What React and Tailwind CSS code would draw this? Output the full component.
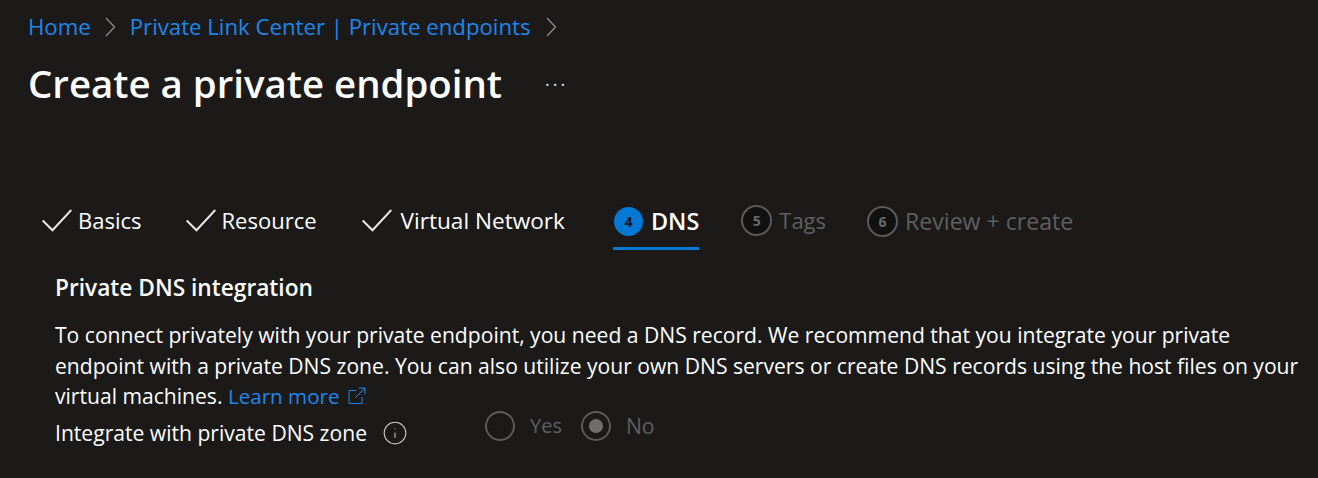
import React from 'react';
import { Info } from 'lucide-react';

const Chevron = ({ className = '' }) => (
  <svg width="10" height="20" viewBox="0 0 10 20" fill="none" stroke="#8a8a8a" strokeWidth="1.25" className={className}><path d="M1 1 L9.5 10 L1 19" /></svg>
);

const Done = ({ label, className = '', gap = 'gap-[6px]' }) => (
  <div className={`flex items-center ${gap} ${className}`}>
    <svg width="30" height="23" viewBox="0 0 30 23" fill="none" stroke="#e8e8e8" strokeWidth="2"><path d="M0.7 11.5 L10.5 21.3 L29.3 1" /></svg>
    <span className="text-white">{label}</span>
  </div>
);

const Pending = ({ n, label, className = '' }) => (
  <div className={`flex items-center gap-[7px] ${className}`}>
    <span className="w-[31px] h-[31px] rounded-full border-2 border-[#5a5a5a] bg-[#111111] text-[#6a6a6a] text-[14px] font-bold flex items-center justify-center">{n}</span>
    <span className="text-[#5f5f5f]">{label}</span>
  </div>
);

export default function App() {
  return (
    <div className="w-[1318px] h-[478px] bg-[#1b1a19] overflow-hidden text-white text-[22px] font-['Open_Sans','Noto_Sans',sans-serif]">
      <div className="pl-[28px] pt-[10px]">
        <div className="flex items-center h-[34px] text-[22.2px] text-[#1b87ec]">
          <span>Home</span>
          <Chevron className="ml-[14px] mr-[15px]" />
          <span>Private Link Center | Private endpoints</span>
          <Chevron className="ml-[15px]" />
        </div>
        <div className="flex items-center mt-[16px] h-[48px]">
          <h1 className="text-[38.4px] font-semibold">Create a private endpoint</h1>
          <span className="ml-[43px] text-[18px] tracking-[3px] text-[#e0e0e0]">···</span>
        </div>
      </div>

      <div className="flex items-start pl-[42px] mt-[96px] h-[50px]">
        <Done label="Basics" />
        <Done label="Resource" className="ml-[44px]" />
        <Done label="Virtual Network" gap="gap-[9px]" className="ml-[45px] text-[22.6px]" />
        <div className="ml-[48px] flex flex-col">
          <div className="flex items-center gap-[8px] pl-[1px]">
            <span className="w-[29px] h-[29px] rounded-full bg-[#0078d4] text-[#10161c] text-[14px] font-bold flex items-center justify-center">4</span>
            <span className="font-semibold text-[23.4px]">DNS</span>
          </div>
          <div className="h-[3px] bg-[#0078d4] mt-[8px]" />
        </div>
        <Pending n="5" label="Tags" className="ml-[42px]" />
        <Pending n="6" label="Review + create" className="ml-[41px] text-[23.1px]" />
      </div>

      <div className="pl-[55px] pr-[10px] mt-[19px] text-[21.1px]">
        <h2 className="font-semibold text-[22.7px] h-[30px] leading-[30px]">Private DNS integration</h2>
        <p className="mt-[17px] leading-[30.5px]">
          To connect privately with your private endpoint, you need a DNS record. We recommend that you integrate your private endpoint with a private DNS zone. You can also utilize your own DNS servers or create DNS records using the host files on your virtual machines.{' '}
          <span className="text-[#1b87ec] text-[20.6px]">Learn more</span>
          <svg width="18" height="18" viewBox="0 0 18 18" fill="none" stroke="#1b87ec" strokeWidth="1" className="inline ml-[8px] mb-[4px]"><path d="M8 3.5 H1 V16.5 H14 V10 M10.5 1 H17 V7.5 M17 1 L7.5 10.5" /></svg>
        </p>
        <div className="flex items-start h-[30px] -mt-[1px]">
          <div className="flex items-center h-[30px] mt-[7px]">
            <span className="w-[327px] whitespace-nowrap">Integrate with private DNS zone</span>
            <Info className="w-[26px] h-[26px] text-[#c8c8c8]" strokeWidth={1} />
          </div>
          <div className="flex items-center h-[30px] ml-[77px]">
            <span className="w-[30px] h-[30px] rounded-full border-2 border-[#5a5a5a]" />
            <span className="ml-[15px] text-[20px] text-[#5f5f5f]">Yes</span>
            <span className="w-[30px] h-[30px] rounded-full border-2 border-[#5a5a5a] ml-[19px] flex items-center justify-center"><span className="w-[14px] h-[14px] rounded-full bg-[#6e6e6e]" /></span>
            <span className="ml-[15px] text-[#5f5f5f]">No</span>
          </div>
        </div>
      </div>
    </div>
  );
}
